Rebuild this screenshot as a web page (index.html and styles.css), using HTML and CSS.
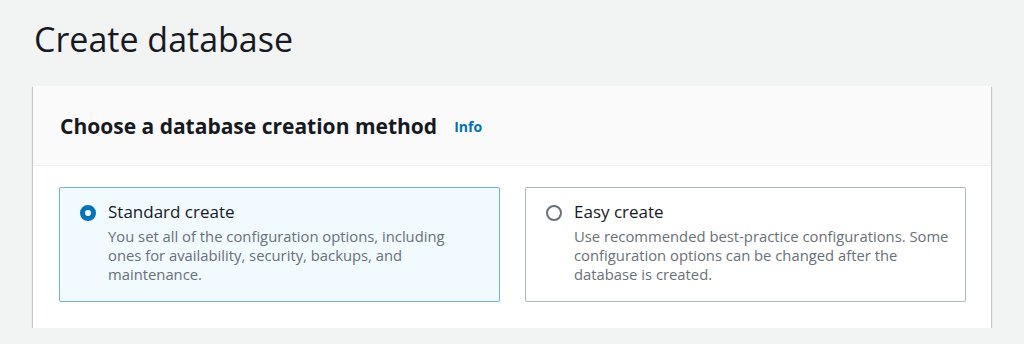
FILE: index.html
```html
<!DOCTYPE html>
<html>
<head>
<meta charset="utf-8">
<link rel="stylesheet" href="styles.css">
</head>
<body>
<div class="page">
  <h1 class="title">Create database</h1>
  <section class="card">
    <div class="card-header">
      <h2 class="card-title">Choose a database creation method</h2>
      <a class="info" href="#">Info</a>
    </div>
    <div class="card-body">
      <label class="tile selected">
        <span class="radio checked"></span>
        <span class="tile-text">
          <span class="tile-label">Standard create</span>
          <span class="tile-desc">You set all of the configuration options, including ones for availability, security, backups, and maintenance.</span>
        </span>
      </label>
      <label class="tile">
        <span class="radio"></span>
        <span class="tile-text">
          <span class="tile-label">Easy create</span>
          <span class="tile-desc">Use recommended best-practice configurations. Some configuration options can be changed after the database is created.</span>
        </span>
      </label>
    </div>
  </section>
</div>
</body>
</html>
```
FILE: styles.css
```css
html, body {
  margin: 0;
  padding: 0;
  background: #f2f3f3;
  font-family: "Open Sans", "Noto Sans", sans-serif;
  color: #16191f;
}
.page {
  padding: 17px 33px 0 33px;
}
.title {
  margin: 0 0 0 1px;
  font-size: 34px;
  font-weight: 400;
  line-height: 44px;
  height: 69px;
  color: #16191f;
}
.card {
  background: #ffffff;
  box-shadow: 0 1px 1px 0 rgba(0, 28, 36, 0.3), 1px 1px 1px 0 rgba(0, 28, 36, 0.15), -1px 1px 1px 0 rgba(0, 28, 36, 0.15);
}
.card-header {
  background: #fafafa;
  height: 80px;
  display: flex;
  align-items: center;
  padding: 0 27px;
  border-bottom: 1px solid #f0f1f1;
  box-sizing: border-box;
}
.card-title {
  margin: 0;
  font-size: 21px;
  font-weight: 700;
  color: #16191f;
}
.info {
  margin-left: 17px;
  font-size: 14px;
  font-weight: 700;
  color: #0073bb;
  text-decoration: none;
  padding-top: 2px;
}
.card-body {
  display: grid;
  grid-template-columns: 1fr 1fr;
  gap: 25px;
  padding: 21px 25px 26px 26px;
}
.tile {
  display: flex;
  align-items: flex-start;
  gap: 12px;
  padding: 13px 16px 17px 20px;
  border: 1px solid #aab7b8;
  border-radius: 2px;
  background: #ffffff;
}
.tile.selected {
  background: #f1faff;
  border-color: #6fb2e0;
  padding-right: 22px;
}
.radio {
  flex: none;
  width: 16px;
  height: 16px;
  margin-top: 4px;
  border-radius: 50%;
  box-sizing: border-box;
  border: 2px solid #687078;
  background: #ffffff;
}
.radio.checked {
  border: 5px solid #0073bb;
}
.tile-text {
  display: flex;
  flex-direction: column;
}
.tile-label {
  font-size: 17px;
  line-height: 22px;
  color: #16191f;
}
.tile-desc {
  font-size: 14.8px;
  line-height: 19px;
  color: #687078;
  margin-top: 4px;
}
```
